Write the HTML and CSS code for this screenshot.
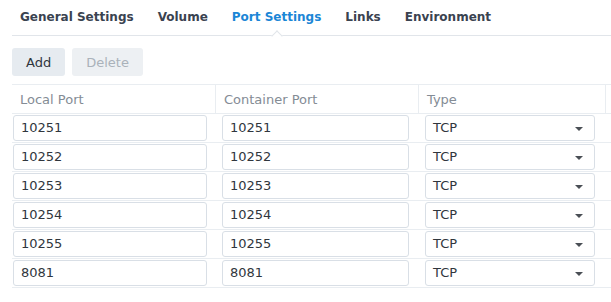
FILE: index.html
```html
<!DOCTYPE html>
<html>
<head>
<meta charset="utf-8">
<link rel="stylesheet" href="styles.css">
</head>
<body>
<div class="page">
  <div class="tabs">
    <div class="tab">General Settings</div>
    <div class="tab">Volume</div>
    <div class="tab active">Port Settings</div>
    <div class="tab">Links</div>
    <div class="tab">Environment</div>
  </div>
  <div class="toolbar">
    <button class="btn">Add</button>
    <button class="btn disabled">Delete</button>
  </div>
  <div class="table">
    <div class="row head">
      <div class="cell c1">Local Port</div>
      <div class="cell c2">Container Port</div>
      <div class="cell c3">Type</div>
      <div class="cell c4"></div>
    </div>
    <div class="row">
      <div class="cell c1"><div class="field">10251</div></div>
      <div class="cell c2"><div class="field">10251</div></div>
      <div class="cell c3"><div class="field select">TCP<span class="caret"></span></div></div>
      <div class="cell c4"></div>
    </div>
    <div class="row">
      <div class="cell c1"><div class="field">10252</div></div>
      <div class="cell c2"><div class="field">10252</div></div>
      <div class="cell c3"><div class="field select">TCP<span class="caret"></span></div></div>
      <div class="cell c4"></div>
    </div>
    <div class="row">
      <div class="cell c1"><div class="field">10253</div></div>
      <div class="cell c2"><div class="field">10253</div></div>
      <div class="cell c3"><div class="field select">TCP<span class="caret"></span></div></div>
      <div class="cell c4"></div>
    </div>
    <div class="row">
      <div class="cell c1"><div class="field">10254</div></div>
      <div class="cell c2"><div class="field">10254</div></div>
      <div class="cell c3"><div class="field select">TCP<span class="caret"></span></div></div>
      <div class="cell c4"></div>
    </div>
    <div class="row">
      <div class="cell c1"><div class="field">10255</div></div>
      <div class="cell c2"><div class="field">10255</div></div>
      <div class="cell c3"><div class="field select">TCP<span class="caret"></span></div></div>
      <div class="cell c4"></div>
    </div>
    <div class="row">
      <div class="cell c1"><div class="field">8081</div></div>
      <div class="cell c2"><div class="field">8081</div></div>
      <div class="cell c3"><div class="field select">TCP<span class="caret"></span></div></div>
      <div class="cell c4"></div>
    </div>
  </div>
</div>
</body>
</html>
```
FILE: styles.css
```css
* { box-sizing: border-box; }
html, body { margin: 0; padding: 0; background: #fff; }
body {
  font-family: "DejaVu Sans", Verdana, sans-serif;
  font-size: 13px;
  color: #353b42;
  overflow: hidden;
}
.page { padding-left: 12px; width: 611px; }
.tabs {
  display: flex;
  gap: 24px;
  height: 36px;
  padding-left: 8px;
  border-bottom: 1px solid #e1e5ea;
}
.tab {
  position: relative;
  font-size: 12px;
  font-weight: bold;
  color: #3a4350;
  line-height: 35px;
  white-space: nowrap;
}
.tab.active { color: #1b86d6; }
.tab.active::after {
  content: "";
  position: absolute;
  left: 50%;
  bottom: -5px;
  width: 7px;
  height: 7px;
  margin-left: -4px;
  background: #fff;
  border-top: 1px solid #e1e5ea;
  border-left: 1px solid #e1e5ea;
  transform: rotate(45deg);
}
.toolbar {
  display: flex;
  gap: 7px;
  margin-top: 12px;
  height: 28px;
}
.btn {
  font-family: inherit;
  font-size: 13px;
  height: 28px;
  padding: 0 14px;
  border: 0;
  border-radius: 3px;
  background: #e6ebf0;
  color: #2f353c;
}
.btn.disabled { background: #edf0f3; color: #aab2ba; }
.table { margin-top: 8px; }
.row {
  display: grid;
  grid-template-columns: 203px 203px 187px 1fr;
  height: 29px;
  border-bottom: 1px solid #e9edf1;
}
.row.head {
  height: 30px;
  border-top: 1px solid #e9edf1;
  color: #848c95;
}
.cell { display: flex; align-items: center; }
.head .cell { padding-left: 8px; }
.head .c2, .head .c3, .head .c4 { border-left: 1px solid #e9edf1; }
.head .c2 { padding-left: 8px; }
.head .c3 { padding-left: 8px; }
.row:not(.head) .c1 { padding: 0 8px 0 1px; }
.row:not(.head) .c2 { padding: 0 9px 0 7px; }
.row:not(.head) .c3 { padding: 0 10px 0 7px; }
.field {
  position: relative;
  width: 100%;
  height: 26px;
  border: 1px solid #d9dfe6;
  border-radius: 3px;
  padding-left: 7px;
  line-height: 24px;
  color: #30363d;
  background: #fff;
}
.caret {
  position: absolute;
  right: 11px;
  top: 11px;
  width: 0;
  height: 0;
  border-left: 4px solid transparent;
  border-right: 4px solid transparent;
  border-top: 4px solid #4a4f55;
}
```
